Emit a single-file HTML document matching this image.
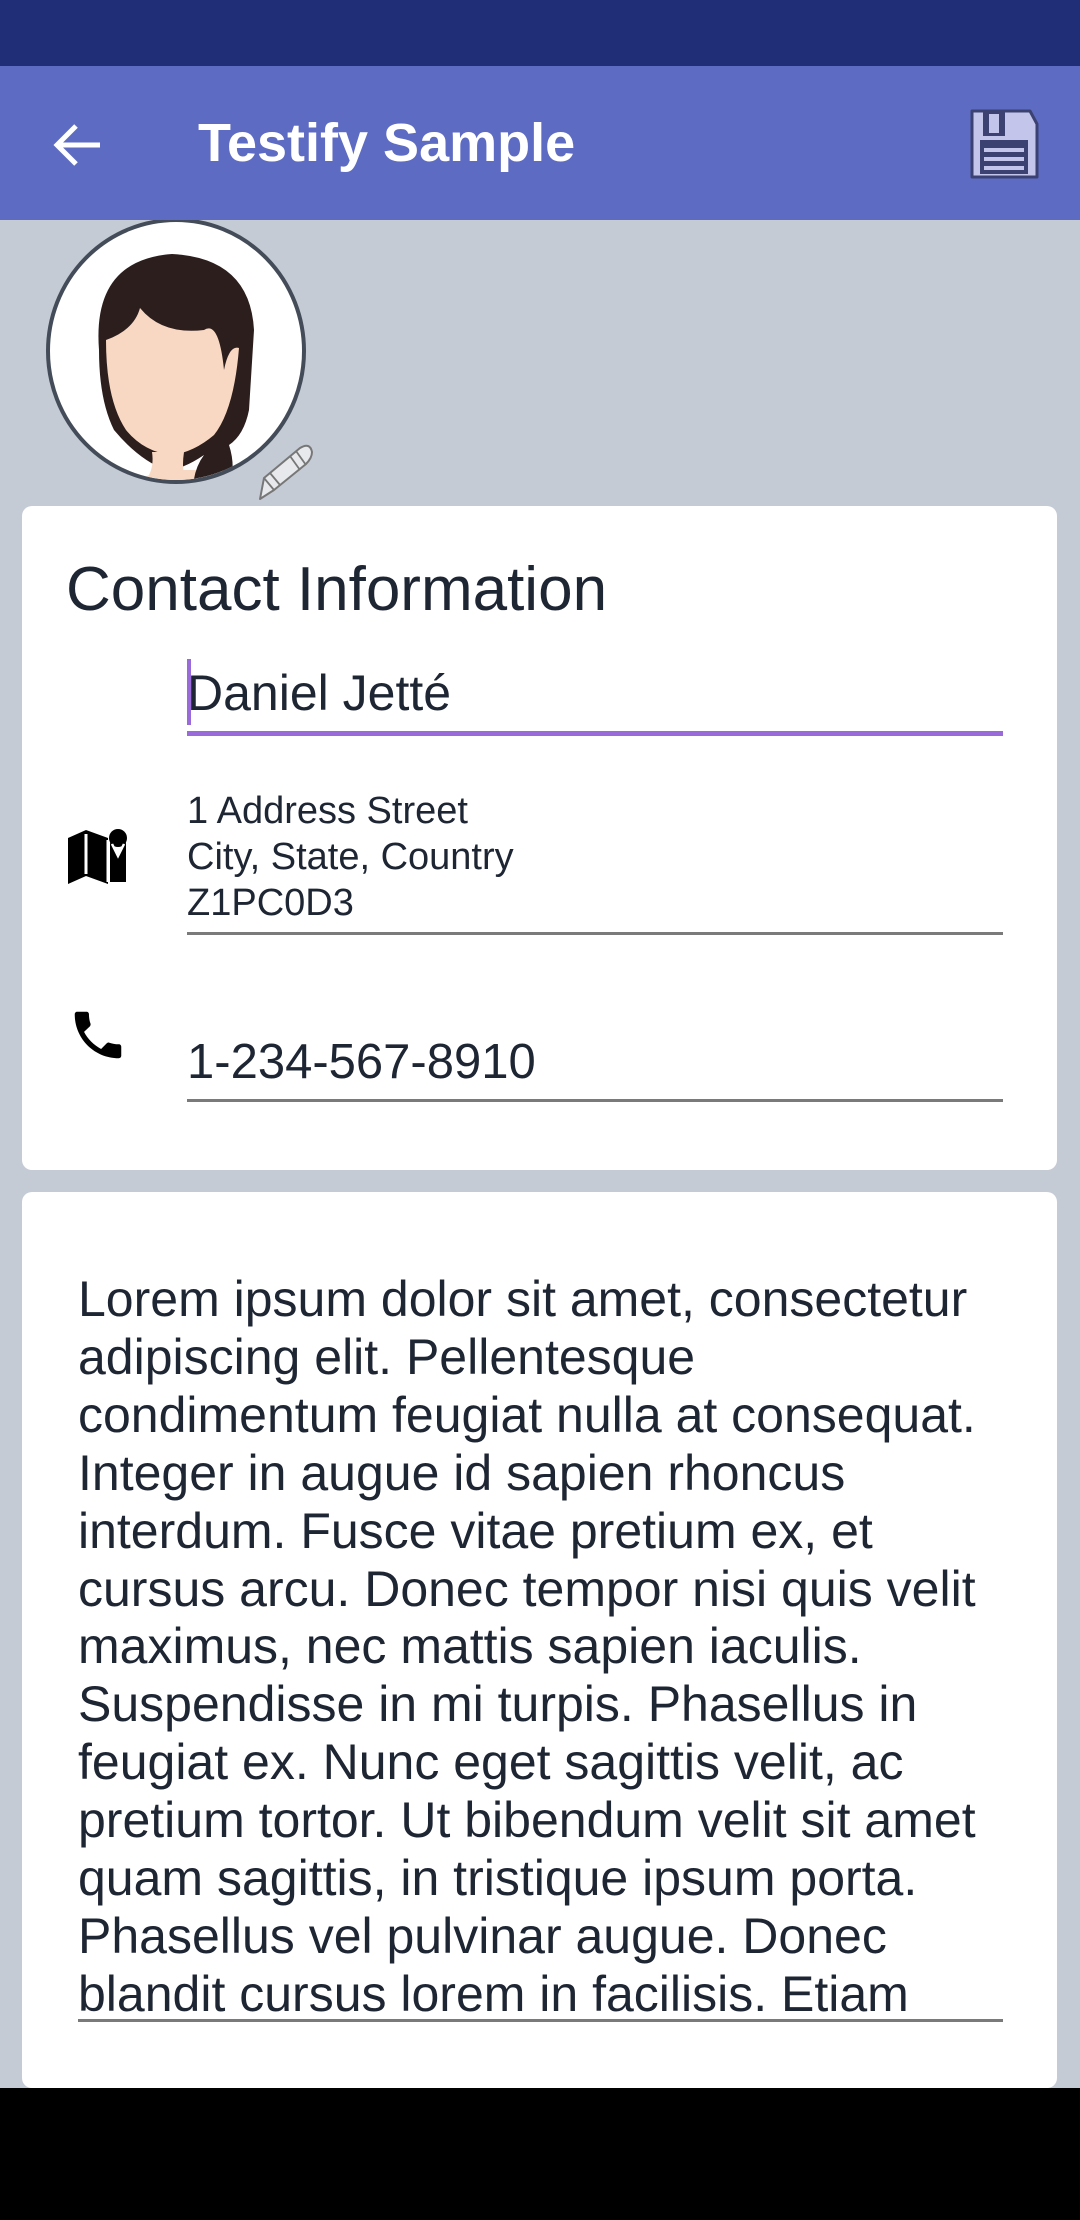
<!DOCTYPE html>
<html><head><meta charset="utf-8"><style>
*{margin:0;padding:0;box-sizing:border-box}
body{width:1080px;height:2220px;background:#c4cbd5;position:relative;overflow:hidden;font-family:"Liberation Sans",sans-serif;color:#1e2533}
.abs{position:absolute}
.nw{white-space:nowrap}
</style></head><body>
<div class="abs" style="left:0;top:0;width:1080px;height:66px;background:#202d77"></div>
<div class="abs" style="left:0;top:66px;width:1080px;height:154px;background:#5e6bc2"></div>
<svg class="abs" style="left:50px;top:120px" width="56" height="50" viewBox="0 0 56 50"><path d="M50 25H8M26 6L7 25l19 19" stroke="#fff" stroke-width="5" fill="none"/></svg>
<div class="abs nw" style="left:198px;top:112px;font-size:54px;font-weight:bold;color:#fff;letter-spacing:0px">Testify Sample</div>
<svg class="abs" style="left:969px;top:108px" width="70" height="72" viewBox="0 0 70 72"><path d="M3 3h58l7 13v53H3z" fill="#c3c6ea" stroke="#3b4271" stroke-width="3" stroke-linejoin="round"/><rect x="14" y="4" width="22" height="24" fill="#3b4271"/><rect x="20" y="6" width="10" height="19" fill="#c3c6ea"/><rect x="11" y="32" width="48" height="34" fill="#3b4271"/><rect x="15" y="40" width="40" height="4" fill="#c3c6ea"/><rect x="15" y="49" width="40" height="4" fill="#c3c6ea"/><rect x="15" y="58" width="40" height="4" fill="#c3c6ea"/></svg>
<svg class="abs" style="left:44px;top:220px" width="320" height="300" viewBox="0 0 320 300">
<defs><clipPath id="c"><ellipse cx="132" cy="131" rx="126" ry="129"/></clipPath></defs>
<ellipse cx="132" cy="131" rx="128" ry="131" fill="#fff" stroke="#434c58" stroke-width="4"/>
<g clip-path="url(#c)">
<path d="M120 250 Q60 270 40 290 L230 290 Q200 260 160 250Z" fill="#f8d8c3"/>
<path d="M55 130 Q48 40 128 34 Q206 38 210 110 L205 190 Q200 215 185 225 Q195 255 178 290 L150 290 Q145 255 160 235 Q138 250 122 250 Q95 240 70 210 Q55 180 55 130Z" fill="#2c1e1d"/>
<path d="M62 120 Q90 110 96 88 Q118 115 160 110 Q175 100 180 150 Q185 125 195 128 Q190 190 170 215 Q150 232 128 235 Q100 232 82 210 Q62 180 62 120Z" fill="#f8d8c3"/>
<path d="M108 232 Q110 245 105 255 L140 255 Q138 245 140 232Z" fill="#f8d8c3"/>
</g>
<path d="M216 279 L220 258 L256 228 Q266 222 268 232 Q268 238 262 244 L230 270 Z" fill="#e7e9ec" stroke="#777" stroke-width="2" stroke-linejoin="round"/>
<path d="M220 258 L230 270 M246 236 L256 250 M252 231 L262 245 M226 253 L236 265" stroke="#777" stroke-width="1.8" fill="none"/>
</svg>
<div class="abs" style="left:22px;top:506px;width:1035px;height:664px;background:#fff;border-radius:10px"></div>
<div class="abs nw" style="left:66px;top:554px;font-size:62px">Contact Information</div>
<div class="abs" style="left:187px;top:659px;width:4px;height:66px;background:#9a6ada"></div>
<div class="abs nw" style="left:187px;top:664px;font-size:50px">Daniel Jetté</div>
<div class="abs" style="left:187px;top:731px;width:816px;height:5px;background:#9a6ada"></div>
<svg class="abs" style="left:66px;top:826px" width="66" height="62" viewBox="0 0 66 62"><path d="M2 12l18-8 22 8v46L20 50 2 58z" fill="#000"/><path d="M20 8v40M42 14v42" stroke="#fff" stroke-width="3"/><path d="M44 16 L52 30 L60 16 L60 56 L44 56Z" fill="#000"/><circle cx="52" cy="12" r="9" fill="#000"/><path d="M46 18 L52 30 L58 18" stroke="#fff" stroke-width="2.5" fill="none"/></svg>
<div class="abs nw" style="left:187px;top:788px;font-size:38px;line-height:46px">1 Address Street<br>City, State, Country<br>Z1PC0D3</div>
<div class="abs" style="left:187px;top:932px;width:816px;height:3px;background:#7a7a7a"></div>
<svg class="abs" style="left:66px;top:1004px" width="64" height="62" viewBox="0 0 24 24"><path d="M6.6 10.8c1.4 2.8 3.8 5.1 6.6 6.6l2.2-2.2c.3-.3.7-.4 1-.2 1.1.4 2.3.6 3.6.6.6 0 1 .4 1 1V20c0 .6-.4 1-1 1C10.6 21 3 13.4 3 4c0-.6.4-1 1-1h3.5c.6 0 1 .4 1 1 0 1.3.2 2.5.6 3.6.1.3 0 .7-.2 1z" fill="#000"/></svg>
<div class="abs nw" style="left:187px;top:1034px;font-size:49px">1-234-567-8910</div>
<div class="abs" style="left:187px;top:1099px;width:816px;height:3px;background:#7a7a7a"></div>
<div class="abs" style="left:22px;top:1192px;width:1035px;height:896px;background:#fff;border-radius:10px"></div>
<div class="abs nw" style="left:78px;top:1271px;font-size:50px;line-height:57.9px;height:749px;overflow:hidden">Lorem ipsum dolor sit amet, consectetur<br>adipiscing elit. Pellentesque<br>condimentum feugiat nulla at consequat.<br>Integer in augue id sapien rhoncus<br>interdum. Fusce vitae pretium ex, et<br>cursus arcu. Donec tempor nisi quis velit<br>maximus, nec mattis sapien iaculis.<br>Suspendisse in mi turpis. Phasellus in<br>feugiat ex. Nunc eget sagittis velit, ac<br>pretium tortor. Ut bibendum velit sit amet<br>quam sagittis, in tristique ipsum porta.<br>Phasellus vel pulvinar augue. Donec<br>blandit cursus lorem in facilisis. Etiam</div>
<div class="abs" style="left:78px;top:2019px;width:925px;height:3px;background:#7a7a7a"></div>
<div class="abs" style="left:0;top:2088px;width:1080px;height:132px;background:#000"></div>
</body></html>
